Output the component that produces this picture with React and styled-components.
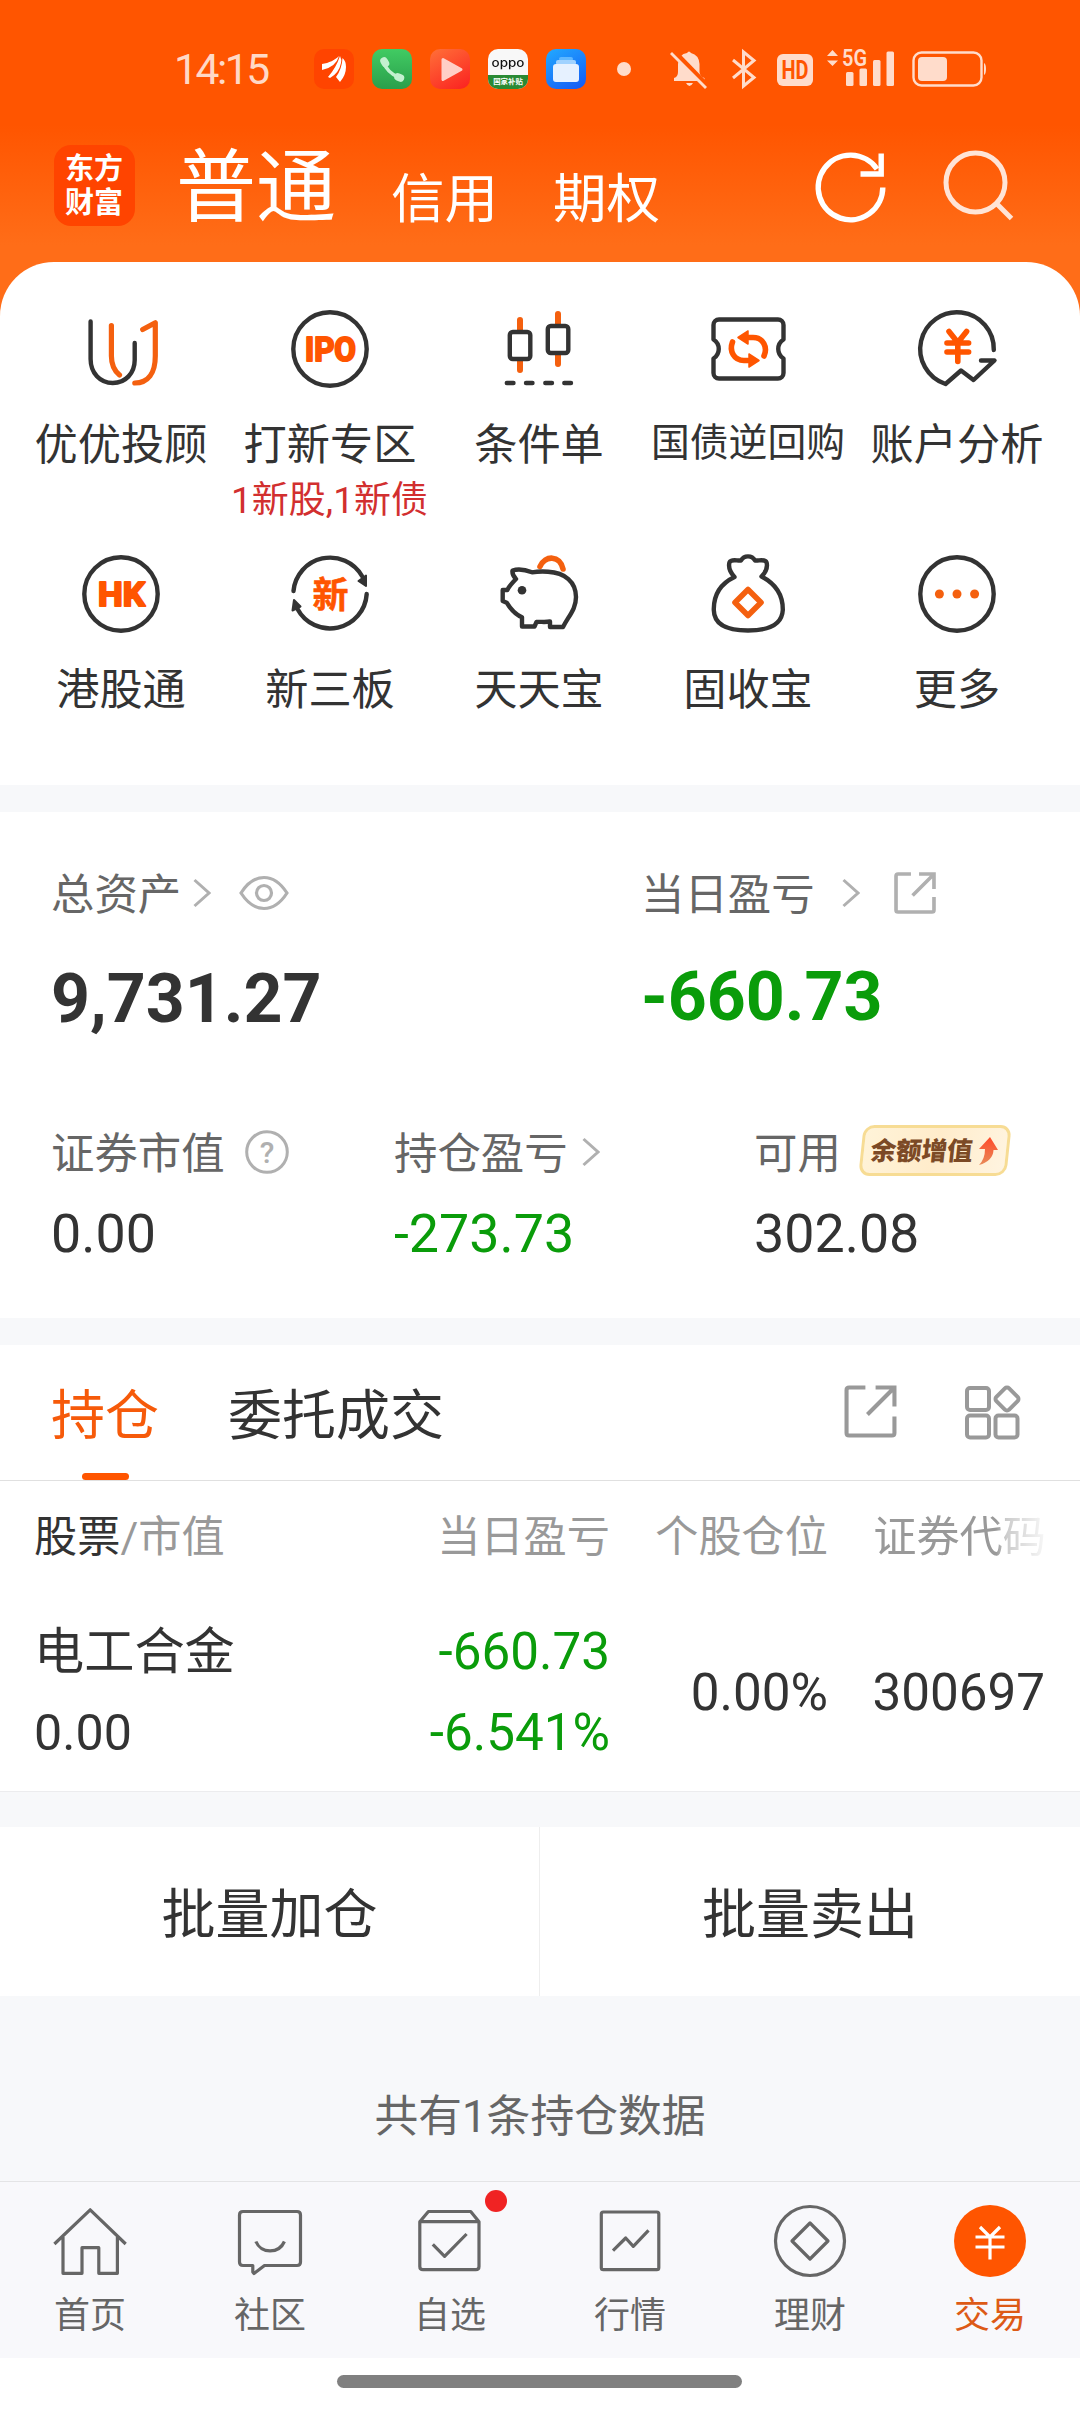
import React from 'react';
import styled, { createGlobalStyle, css } from 'styled-components';

const orange = '#ff5500';
const dark = '#333333';
const gray = '#666666';
const green = '#0a9c0a';

const GlobalStyle = createGlobalStyle`
  * {
    box-sizing: border-box;
  }
  body {
    margin: 0;
    background: #f7f8fa;
    color: ${dark};
    font-family: Roboto, 'Noto Sans CJK SC', sans-serif;
  }
  svg {
    display: block;
    flex: none;
  }
`;

const Page = styled.div`
  display: flex;
  flex-direction: column;
  width: 1080px;
  height: 2412px;
  overflow: hidden;
`;

const Top = styled.div`
  background: linear-gradient(#ff5500 0, #ff5500 125px, #ff6d18 245px);
`;

const StatusBar = styled.div`
  display: flex;
  align-items: center;
  height: 138px;
  padding-left: 174px;
`;

const Clock = styled.div`
  width: 140px;
  padding-top: 1px;
  font-size: 42.5px;
  line-height: 60px;
  letter-spacing: -2.4px;
  color: #ffd9c6;
`;

const AppIcons = styled.div`
  display: flex;
  gap: 18px;
`;

const AppIcon = styled.div`
  width: 40px;
  height: 40px;
  border-radius: 10px;
  overflow: hidden;
  background: ${props => props.$bg};
`;

const OppoName = styled.div`
  height: 26px;
  padding-top: 1px;
  font: 500 12px/26px Inter, sans-serif;
  text-align: center;
  color: #111;
  transform: scaleX(1.12);
`;

const OppoTag = styled.div`
  height: 14px;
  font-size: 7.4px;
  font-weight: 700;
  line-height: 14px;
  text-align: center;
  white-space: nowrap;
  color: #fff;
  background: #2a8a34;
`;

const TitleBar = styled.div`
  display: flex;
  align-items: flex-start;
  height: 124px;
  padding: 0 65px 0 54px;
  color: #fff;
`;

const Logo = styled.div`
  display: flex;
  flex-direction: column;
  width: 81px;
  height: 81px;
  margin-top: 7px;
  padding: 7px 0 0 11px;
  border-radius: 17px;
  font-size: 29px;
  font-weight: 700;
  line-height: 34px;
  background: #ff4400;
`;

const Accounts = styled.div`
  display: flex;
  flex: 1;
  align-items: flex-start;
  padding: 4px 0 0 41px;
`;

const Account = styled.div`
  margin-top: ${props => (props.$active ? 0 : 11.5)}px;
  margin-right: 55px;
  font-size: ${props => (props.$active ? 80 : 53.5)}px;
  line-height: 92px;
`;

const TitleActions = styled.div`
  display: flex;
  gap: 45px;
  padding-top: 8px;
`;

const Shortcuts = styled.div`
  display: grid;
  grid-template-columns: repeat(5, 209px);
  grid-auto-rows: 245px;
  height: 523px;
  padding: 42px 0 0 16px;
  border-radius: 54px 54px 0 0;
  background: #fff;
`;

const Shortcut = styled.div`
  display: flex;
  flex-direction: column;
  align-items: center;
  white-space: nowrap;
`;

const ShortcutLabel = styled.div`
  margin: 22px 0 0 1px;
  height: 60px;
  font-size: ${props => (props.$small ? 38.8 : 43.2)}px;
  line-height: ${props => (props.$small ? 53 : 60)}px;
`;

const ShortcutHint = styled.div`
  margin-top: 1px;
  font-size: 37px;
  line-height: 48px;
  color: #d22f2f;
`;

const Assets = styled.div`
  height: 506px;
  margin-top: 27px;
  padding: 54px 0 0 51px;
  background: #fff;
`;

const AssetRow = styled.div`
  display: grid;
  grid-template-columns: ${props => props.$columns};
  height: 174px;
  margin-bottom: 85px;
`;

const AssetLabel = styled.div`
  display: flex;
  align-items: center;
  height: 60px;
  font-size: 43.4px;
  line-height: 60px;
  color: ${gray};
  white-space: nowrap;
  > svg {
    margin-bottom: 6px;
  }
`;

const AssetValue = styled.div`
  font-size: 53.8px;
  line-height: 60px;
  margin-top: 19px;
  color: ${props => (props.$loss ? green : dark)};
  ${props =>
    props.$big &&
    css`
      margin-top: ${props.$loss ? 31 : 33}px;
      font-size: 68px;
      font-weight: 700;
      line-height: 80px;
    `}
`;

const Gain = styled.div`
  display: flex;
  align-items: center;
  justify-content: center;
  gap: 5px;
  width: 148px;
  height: 51px;
  margin: -9px 0 0 20px;
  position: relative;
  font-family: 'Noto Sans CJK SC', sans-serif;
  font-size: 25.5px;
  font-weight: 900;
  color: #7c4a26;
  &::before {
    content: '';
    position: absolute;
    inset: 0;
    border: 3px solid #f7dc94;
    border-radius: 11px;
    background: linear-gradient(100deg, #fff3d8, #ffeccb 50%, #fff4e0);
    transform: skewX(-6deg);
  }
  span,
  svg {
    position: relative;
  }
  span {
    line-height: 36px;
    margin-top: -3px;
    transform: skewX(-6deg);
  }
`;

const Holdings = styled.div`
  height: 447px;
  margin-top: 27px;
  background: #fff;
  border-bottom: 1px solid #ececee;
`;

const Tabs = styled.div`
  display: flex;
  height: 136px;
  padding: 0 58px 0 51px;
  border-bottom: 1px solid #e0e0e0;
`;

const Tab = styled.div`
  display: flex;
  flex-direction: column;
  align-items: center;
  justify-content: space-between;
  margin-right: 69px;
  padding-top: 36px;
  font-size: 54px;
  line-height: 72px;
  color: ${props => (props.$active ? '#f65a0a' : dark)};
  &::after {
    content: '';
    width: 47px;
    height: 7px;
    border-radius: 4px;
    background: ${props => (props.$active ? orange : 'transparent')};
  }
`;

const TabActions = styled.div`
  display: flex;
  gap: 67px;
  margin-left: auto;
  padding-top: 40px;
`;

const tableRow = css`
  display: grid;
  grid-template-columns: 358px 218px 218px 217px;
  padding-left: 34px;
`;

const TableHead = styled.div`
  ${tableRow}
  padding-top: 27px;
  font-size: 43.2px;
  line-height: 60px;
  color: #999;
  b {
    font-weight: 400;
    color: ${dark};
  }
`;

const HeadCell = styled.div`
  text-align: ${props => (props.$first ? 'left' : 'right')};
  white-space: nowrap;
  ${props =>
    props.$fade &&
    css`
      margin-right: -1px;
      mask-image: linear-gradient(90deg, #000 168px, rgba(0, 0, 0, 0.5) 178px, rgba(0, 0, 0, 0.08) 217px);
    `}
`;

const TableRow = styled.div`
  ${tableRow}
  align-items: center;
  padding-top: 54px;
`;

const Cell = styled.div`
  text-align: ${props => (props.$first ? 'left' : 'right')};
  font-size: ${props => (props.$first ? 50.2 : 51.2)}px;
  line-height: 60px;
  color: ${props => (props.$loss ? green : dark)};
`;

const StockName = styled.div`
  margin-bottom: 21px;
`;

const BatchBar = styled.div`
  display: grid;
  grid-template-columns: 539px 541px;
  height: 169px;
  margin-top: 35px;
  background: #fff;
`;

const BatchButton = styled.div`
  padding-top: 53px;
  font-size: 54px;
  line-height: 72px;
  text-align: center;
  & + & {
    border-left: 1px solid #eeeeee;
  }
`;

const Note = styled.div`
  height: 185px;
  padding-top: 91px;
  font-size: 43.8px;
  line-height: 60px;
  text-align: center;
  color: ${gray};
`;

const NavBar = styled.div`
  display: grid;
  grid-template-columns: repeat(6, 1fr);
  height: 177px;
  border-top: 1px solid #e4e4e6;
  background: #f8f8fb;
`;

const NavItem = styled.div`
  display: flex;
  flex-direction: column;
  align-items: center;
  position: relative;
  padding-top: 19px;
  font-size: 36px;
  line-height: 48px;
  color: ${props => (props.$active ? '#dd5a16' : gray)};
  svg {
    margin-bottom: 11px;
  }
`;

const Dot = styled.div`
  position: absolute;
  top: 8px;
  left: 125px;
  width: 22px;
  height: 22px;
  border-radius: 50%;
  background: #f02323;
`;

const HomeArea = styled.div`
  display: flex;
  height: 54px;
  padding: 17px 0 0 337px;
  background: #fff;
`;

const HomeBar = styled.div`
  width: 405px;
  height: 13px;
  border-radius: 7px;
  background: #808080;
`;

const ShortcutIcon = ({ children }) => (
  <svg
    width="90"
    height="90"
    viewBox="0 0 90 90"
    fill="none"
    stroke={dark}
    strokeWidth="4.4"
    strokeLinecap="round"
    strokeLinejoin="round"
  >
    {children}
  </svg>
);

const Ring = () => <circle cx="45" cy="45" r="36.7" />;

const IconText = ({ children, size, y, width, bold = 2.2 }) => (
  <text
    x="45.5"
    y={y}
    textAnchor="middle"
    textLength={width}
    lengthAdjust="spacingAndGlyphs"
    fontFamily="Roboto, 'Noto Sans CJK SC', sans-serif"
    fontSize={size}
    fontWeight="700"
    fill={orange}
    stroke={orange}
    strokeWidth={bold}
  >
    {children}
  </text>
);

const shortcuts = [
  {
    label: '优优投顾',
    icon: (
      <>
        <path d="M14.6 17.5V55C14.6 69 24 79 36.8 79S58.7 69 58.7 56V39" />
        <g stroke="#f4600f" strokeWidth="5.2">
          <path d="M35.4 21.5V52C35.4 61 38 66.5 43.5 71" />
          <path d="M66.7 25.5L79.3 18.8V52C79.3 69 72 79 58.8 79" />
        </g>
      </>
    )
  },
  {
    label: '打新专区',
    hint: '1新股,1新债',
    icon: (
      <>
        <Ring />
        <IconText size="34" y="57" width="51">
          IPO
        </IconText>
      </>
    )
  },
  {
    label: '条件单',
    icon: (
      <>
        <path stroke="#f4600f" strokeWidth="6" d="M26 16V26M26 56V66M64 10V20M64 50V60" />
        <rect x="15.8" y="28" width="20.5" height="27" rx="3" />
        <rect x="53.8" y="22" width="20.5" height="27" rx="3" />
        <path d="M12.8 79H19.5M32 79H38.5M51.3 79H58M70.3 79H77" />
      </>
    )
  },
  {
    label: '国债逆回购',
    small: true,
    icon: (
      <>
        <path d="M16 15.5H75A5.5 5.5 0 0 1 80.5 21V35.5C73.5 40 73.5 50 80.5 54.5V69A5.5 5.5 0 0 1 75 74.5H16A5.5 5.5 0 0 1 10.5 69V54.5C17.5 50 17.5 40 10.5 35.5V21A5.5 5.5 0 0 1 16 15.5Z" />
        <g stroke={orange} strokeWidth="5.6">
          <path d="M46 33.500H50C60 33.500 65 43 61 52" />
          <path d="M45 56.500H41C31 56.500 26 47 29.500 38" />
        </g>
        <path d="M35 33.500L45 27V40ZM56 56.500L46 63V50Z" stroke={orange} strokeWidth="1.5" fill={orange} />
      </>
    )
  },
  {
    label: '账户分析',
    icon: (
      <>
        <path d="M81.8 46A36.8 36.8 0 1 0 33.5 80L49 66.5L61.5 76L82.5 56.5H69" />
        <path
          stroke={orange}
          strokeWidth="5.6"
          d="M37 27.500L45.800 38.500L54.600 27.500M35 39H56.600M35 48H56.600M45.800 39V57.500"
        />
      </>
    )
  },
  {
    label: '港股通',
    icon: (
      <>
        <Ring />
        <IconText size="34" y="57" width="47">
          HK
        </IconText>
      </>
    )
  },
  {
    label: '新三板',
    icon: (
      <>
        <path d="M8.5 42A36.8 36.8 0 0 1 77 27M81.7 45A36.8 36.8 0 0 1 12.5 60" />
        <path d="M73.5 32L81 26.5V37ZM9 51L7.5 61.5L15.5 57.5Z" strokeWidth="2" fill={dark} />
        <IconText size="36" y="58.5" width="36" bold={0.6}>
          新
        </IconText>
      </>
    )
  },
  {
    label: '天天宝',
    icon: (
      <>
        <path stroke="#f4600f" strokeWidth="5.6" d="M46 17.500C51 6 66 6 69 20" />
        <path d="M18.5 21.5C25 19.5 32 21 38 23.3C43 22.5 48 22.3 54 22.7C71 23.5 82 33 82 48C82 60 75 66.5 69 78H56V72.5C51 73.5 46 72.5 42.5 73L40.5 77.5H28V68.3C21 65.5 16.5 60 12.7 53.7L8.7 52V41H13.3C15.5 36.5 18 34 22 30C19.5 27.5 18 25 18.5 21.5Z" />
        <circle cx="28" cy="41.3" r="4.3" fill={dark} stroke="none" />
      </>
    )
  },
  {
    label: '固收宝',
    icon: (
      <>
        <path d="M31.5 28C26 22 25.3 18 26.4 13.5C28 9.5 34 12 38 11.5C41 6 49 6 52 11.5C56 12 62 9.5 63.6 13.5C64.7 18 64 22 58.5 27.5C71 34 80 45 79.8 61C79 76 65 81.5 45 81.5S11 76 10.8 61C10.5 45 19 34 31.5 28Z" />
        <path stroke="#f4600f" strokeWidth="5.6" d="M45 40.500L58 53.500L45 66.500L32 53.500Z" />
      </>
    )
  },
  {
    label: '更多',
    icon: (
      <>
        <Ring />
        <g fill="#f4600f" stroke="none">
          <circle cx="27.4" cy="45" r="4.5" />
          <circle cx="45" cy="45" r="4.5" />
          <circle cx="62.6" cy="45" r="4.5" />
        </g>
      </>
    )
  }
];

const navItems = [
  {
    label: '首页',
    icon: <path d="M4.4 43L40.2 8.8L75.7 43M13 36V72.3H32V46.7H48.8V72.3H67.4V36" />
  },
  {
    label: '社区',
    icon: (
      <>
        <path d="M13 10.5H67Q70.5 10.5 70.5 14V61Q70.5 64.5 67 64.5H34.5L24 72.5L22.8 71V64.5H13Q9.5 64.5 9.5 61V14Q9.5 10.5 13 10.5Z" />
        <path d="M25.9 40.5C31 53 49 53 54.4 40.5" />
      </>
    )
  },
  {
    label: '自选',
    dot: true,
    icon: (
      <>
        <path d="M9.8 20.7L18.4 10.5H60.7L69 20.7V65.5Q69 68.7 65.8 68.7H13Q9.8 68.7 9.8 65.5V20.7H69" />
        <path d="M22.8 43.3L34.6 55.3L56.6 33" />
      </>
    )
  },
  {
    label: '行情',
    icon: (
      <>
        <rect x="11.3" y="11" width="57.5" height="57.7" rx="2" />
        <path d="M23 49.7L35.7 37L43.3 45.3L58.5 29.3" />
      </>
    )
  },
  {
    label: '理财',
    icon: (
      <>
        <circle cx="40" cy="40" r="34.5" />
        <path d="M40 22L58 40L40 58L22 40Z" />
      </>
    )
  },
  {
    label: '交易',
    active: true,
    icon: (
      <>
        <circle cx="40" cy="40" r="36" fill={orange} stroke="none" />
        <path stroke="#fff" d="M30 26L40 36L50 26M25.500 36H54.500M25.500 46H54.500M40 36V58.500" />
      </>
    )
  }
];

const Chevron = ({ gap }) => (
  <svg width={18 + gap} height="30" viewBox={`${-gap} 0 ${18 + gap} 30`} fill="none" stroke="#b0b0b0" strokeWidth="3">
    <path d="M1.5 2L16 15L1.5 28" />
  </svg>
);

const ShareIcon = ({ size, color, width }) => (
  <svg width={size} height={size} viewBox="0 0 52 52" fill="none" stroke={color} strokeWidth={width}>
    <path d="M21 2.5H5Q2.5 2.5 2.5 5V47Q2.5 49.5 5 49.5H47Q49.5 49.5 49.5 47V31" />
    <path d="M31 2.5H49.5V21M49 3L23 29" />
  </svg>
);

const StatusIcons = () => (
  <svg width="380" height="48" viewBox="0 0 380 48" fill="#ffdccb">
    <circle cx="18" cy="24" r="7" />
    {/* muted bell */}
    <path d="M68 36V33Q72 32 72 27V19Q73 9 81 8Q83 5 85 8Q93 10 93.5 19V27Q94 32 98.5 33V36ZM80 38H87Q83.5 44 80 38Z" />
    <path d="M67 6L101 41" stroke={orange} strokeWidth="6" />
    <path d="M65 8L100 43" stroke="#ffdccb" strokeWidth="2.8" />
    <path d="M127 15L148 32.5L137.5 41V7L148 15.5L127 33" fill="none" stroke="#ffdccb" strokeWidth="3" />
    <rect x="171" y="9" width="36" height="32" rx="6" />
    <text
      x="189"
      y="34"
      textAnchor="middle"
      textLength="27"
      lengthAdjust="spacingAndGlyphs"
      fontFamily="Roboto, sans-serif"
      fontSize="25"
      fontWeight="700"
      fill={orange}
    >
      HD
    </text>
    <path d="M221 11L226.5 5L232 11ZM221 15.5L226.5 21L232 15.5Z" />
    <text
      x="236"
      y="20.5"
      textLength="25"
      lengthAdjust="spacingAndGlyphs"
      fontFamily="Roboto, sans-serif"
      fontSize="24"
      fontWeight="600"
    >
      5G
    </text>
    <rect x="240" y="27" width="7.5" height="14" rx="1.5" />
    <rect x="253.5" y="23.5" width="7.5" height="17.5" rx="1.5" />
    <rect x="267" y="15" width="7.5" height="26" rx="1.5" />
    <rect x="280.5" y="6.5" width="7.5" height="34.5" rx="1.5" />
    <rect x="307.5" y="7.5" width="68" height="33" rx="8" fill="none" stroke="#ffdccb" strokeWidth="2.4" />
    <rect x="312" y="12" width="29" height="24" rx="4" />
    <path d="M378 18Q380 19 380 24T378 30Z" />
  </svg>
);

const App = () => (
  <Page>
    <GlobalStyle />
    <Top>
      <StatusBar>
        <Clock>14:15</Clock>
        <AppIcons>
          <AppIcon $bg="#ff4400">
            <svg width="40" height="40" viewBox="0 0 40 40" fill="#fff">
              <path d="M8 15C15 14 21 11 25 7Q22 18 8 21ZM14 28Q22 19 26 7Q28 11 27 14Q25 24 16 29ZM22 28Q28 20 28.5 9Q32 12 32 18Q32 26 26 33Z" />
            </svg>
          </AppIcon>
          <AppIcon $bg="linear-gradient(#41cb63, #2a9f4b)">
            <svg width="40" height="40" viewBox="0 0 40 40" fill="none" stroke="#c4f0d0" strokeLinecap="round">
              <path d="M12 14Q15 23 26 28" strokeWidth="3.5" />
              <path d="M12 12L13.5 14.5M26 28L28.5 29" strokeWidth="7.5" />
            </svg>
          </AppIcon>
          <AppIcon $bg="linear-gradient(150deg, #ff7038, #fb2020)">
            <svg width="40" height="40" viewBox="0 0 40 40" fill="#ffcfc6" stroke="#ffcfc6" strokeWidth="3" strokeLinejoin="round">
              <path d="M13 10.5L31 20.5L13 30.5Z" />
            </svg>
          </AppIcon>
          <AppIcon $bg="#f8f8f8">
            <OppoName>oppo</OppoName>
            <OppoTag>国家补贴</OppoTag>
          </AppIcon>
          <AppIcon $bg="linear-gradient(150deg, #22aaff, #1458f5)">
            <svg width="40" height="40" viewBox="0 0 40 40">
              <rect x="13" y="8" width="14" height="4" rx="2" fill="#5fb8ff" />
              <rect x="10" y="11" width="20" height="5" rx="2" fill="#a0d2ff" />
              <rect x="7" y="15" width="26" height="18" rx="3" fill="#e6f1ff" />
            </svg>
          </AppIcon>
        </AppIcons>
        <svg width="20" height="1" />
        <StatusIcons />
      </StatusBar>
      <TitleBar>
        <Logo>
          <span>东方</span>
          <span>财富</span>
        </Logo>
        <Accounts>
          <Account $active>普通</Account>
          <Account>信用</Account>
          <Account>期权</Account>
        </Accounts>
        <TitleActions>
          <svg width="80" height="80" viewBox="0 0 80 80" fill="none" stroke="#fff" strokeWidth="5.4">
            <path d="M72.8 41.5A32.3 32.3 0 1 1 67 23" />
            <path d="M50.5 28H71.2V7.5" />
          </svg>
          <svg width="80" height="80" viewBox="0 0 80 80" fill="none" stroke="#ffe4d6" strokeWidth="5">
            <circle cx="40.5" cy="36.5" r="29.5" />
            <path d="M61.5 57.5L76.5 72.5" />
          </svg>
        </TitleActions>
      </TitleBar>
      <Shortcuts>
        {shortcuts.map(item => (
          <Shortcut key={item.label}>
            <ShortcutIcon>{item.icon}</ShortcutIcon>
            <ShortcutLabel $small={item.small}>{item.label}</ShortcutLabel>
            {item.hint && <ShortcutHint>{item.hint}</ShortcutHint>}
          </Shortcut>
        ))}
      </Shortcuts>
    </Top>
    <Assets>
      <AssetRow $columns="590px 1fr">
        <div>
          <AssetLabel>
            总资产
            <Chevron gap={12} />
            <svg width="78" height="36" viewBox="-28 0 78 36" fill="none" stroke="#b0b0b0" strokeWidth="3.2">
              <path d="M2 18Q12 2.5 25 2.5T48 18Q38 33.5 25 33.5T2 18Z" />
              <circle cx="25" cy="18" r="7.5" />
            </svg>
          </AssetLabel>
          <AssetValue $big>9,731.27</AssetValue>
        </div>
        <div>
          <AssetLabel>
            当日盈亏
            <Chevron gap={27} />
            <svg width="34" height="1" />
            <ShareIcon size={42} color="#b0b0b0" width={4.5} />
          </AssetLabel>
          <AssetValue $big $loss>
            -660.73
          </AssetValue>
        </div>
      </AssetRow>
      <AssetRow $columns="343px 360px 1fr">
        <div>
          <AssetLabel>
            证券市值
            <svg width="64" height="44" viewBox="-20 0 64 44" fill="none" stroke="#b0b0b0" strokeWidth="3">
              <circle cx="22" cy="22" r="20.3" />
              <text
                x="22"
                y="32.5"
                textAnchor="middle"
                fontFamily="Roboto, sans-serif"
                fontSize="30"
                fontWeight="500"
                fill="#b0b0b0"
                stroke="none"
              >
                ?
              </text>
            </svg>
          </AssetLabel>
          <AssetValue>0.00</AssetValue>
        </div>
        <div>
          <AssetLabel>
            持仓盈亏
            <Chevron gap={14} />
          </AssetLabel>
          <AssetValue $loss>-273.73</AssetValue>
        </div>
        <div>
          <AssetLabel>
            可用
            <Gain>
              <span>余额增值</span>
              <svg width="20" height="28" viewBox="0 0 20 28">
                <defs>
                  <linearGradient id="rise" x1="0" y1="0" x2="0" y2="1">
                    <stop offset="0" stopColor="#ff4a2a" />
                    <stop offset="1" stopColor="#e88a58" />
                  </linearGradient>
                </defs>
                <path fill="url(#rise)" d="M12 0L20 13H15.5Q15 24 1 28Q7 22 7 12H1Z" />
              </svg>
            </Gain>
          </AssetLabel>
          <AssetValue>302.08</AssetValue>
        </div>
      </AssetRow>
    </Assets>
    <Holdings>
      <Tabs>
        <Tab $active>持仓</Tab>
        <Tab>委托成交</Tab>
        <TabActions>
          <ShareIcon size={53} color="#999" width={4} />
          <svg width="58" height="55" viewBox="0 0 58 55" fill="none" stroke="#999" strokeWidth="4">
            <rect x="3" y="3" width="22" height="22" rx="3" />
            <rect x="3" y="30.5" width="22" height="22" rx="3" />
            <rect x="31.5" y="30.5" width="22" height="22" rx="3" />
            <rect x="34" y="5" width="18" height="18" rx="3" transform="rotate(45 43 14)" />
          </svg>
        </TabActions>
      </Tabs>
      <TableHead>
        <HeadCell $first>
          <b>股票</b>/市值
        </HeadCell>
        <HeadCell>当日盈亏</HeadCell>
        <HeadCell>个股仓位</HeadCell>
        <HeadCell $fade>证券代码</HeadCell>
      </TableHead>
      <TableRow>
        <Cell $first>
          <StockName>电工合金</StockName>
          0.00
        </Cell>
        <Cell $loss>
          <StockName>-660.73</StockName>
          -6.541%
        </Cell>
        <Cell>0.00%</Cell>
        <Cell>300697</Cell>
      </TableRow>
    </Holdings>
    <BatchBar>
      <BatchButton>批量加仓</BatchButton>
      <BatchButton>批量卖出</BatchButton>
    </BatchBar>
    <Note>共有1条持仓数据</Note>
    <NavBar>
      {navItems.map(item => (
        <NavItem key={item.label} $active={item.active}>
          <svg width="80" height="80" viewBox="0 0 80 80" fill="none" stroke={gray} strokeWidth="3.2" strokeLinejoin="round">
            {item.icon}
          </svg>
          {item.label}
          {item.dot && <Dot />}
        </NavItem>
      ))}
    </NavBar>
    <HomeArea>
      <HomeBar />
    </HomeArea>
  </Page>
);

export default App;
